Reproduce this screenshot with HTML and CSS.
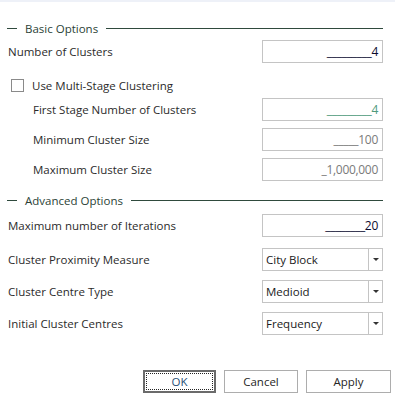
FILE: index.html
```html
<!DOCTYPE html>
<html lang="en">
<head>
    <meta charset="UTF-8">
    <title>Clustering Options</title>
    <link rel="stylesheet" href="styles.css">
</head>
<body>
    <div class="dialog">
        <div class="group-title first">
            <span class="dash"></span>
            <span class="group-text">Basic Options</span>
            <span class="rule"></span>
        </div>
        <div class="row r1">
            <span class="label">Number of Clusters</span>
            <div class="field"><span class="mask dark">_________4</span></div>
        </div>
        <div class="check-row">
            <span class="checkbox"></span>
            <span class="label">Use Multi-Stage Clustering</span>
        </div>
        <div class="row r2">
            <span class="label indent">First Stage Number of Clusters</span>
            <div class="field"><span class="mask green">_________4</span></div>
        </div>
        <div class="row r3">
            <span class="label indent">Minimum Cluster Size</span>
            <div class="field"><span class="mask grey">_____100</span></div>
        </div>
        <div class="row r3">
            <span class="label indent">Maximum Cluster Size</span>
            <div class="field"><span class="mask grey">_1,000,000</span></div>
        </div>
        <div class="group-title second">
            <span class="dash"></span>
            <span class="group-text">Advanced Options</span>
            <span class="rule"></span>
        </div>
        <div class="row r4">
            <span class="label">Maximum number of Iterations</span>
            <div class="field"><span class="mask dark">________20</span></div>
        </div>
        <div class="row r5">
            <span class="label">Cluster Proximity Measure</span>
            <div class="combo"><span class="combo-text">City Block</span><span class="combo-btn"><span class="arrow"></span></span></div>
        </div>
        <div class="row r6">
            <span class="label">Cluster Centre Type</span>
            <div class="combo"><span class="combo-text">Medioid</span><span class="combo-btn"><span class="arrow"></span></span></div>
        </div>
        <div class="row r6">
            <span class="label">Initial Cluster Centres</span>
            <div class="combo"><span class="combo-text">Frequency</span><span class="combo-btn"><span class="arrow"></span></span></div>
        </div>
        <div class="buttons">
            <button class="btn default"><span class="focus">OK</span></button>
            <button class="btn cancel">Cancel</button>
            <button class="btn apply">Apply</button>
        </div>
    </div>
</body>
</html>
```

FILE: styles.css
```css
html, body {
    margin: 0;
    padding: 0;
    background: #ffffff;
}
body {
    border-top: 2px solid #eef1f8;
    font-family: "Open Sans", "Noto Sans", sans-serif;
    font-size: 11.5px;
    color: #2b2b2b;
}
.dialog {
    display: flex;
    flex-direction: column;
    padding: 0 12px 0 8px;
}
.group-title {
    display: flex;
    align-items: center;
    height: 16px;
    margin-left: -1px;
}
.group-title.first {
    margin-top: 18px;
}
.group-title.second {
    margin-top: 11px;
}
.dash {
    width: 10px;
    border-top: 1px solid #2f4a3d;
}
.group-text {
    padding: 0 8px;
    color: #2b3f36;
}
.rule {
    flex: 1;
    border-top: 1px solid #2f4a3d;
}
.row {
    display: flex;
    align-items: center;
    justify-content: space-between;
    height: 23px;
}
.r1 { margin-top: 4px; }
.r2 { margin-top: 5px; }
.r3 { margin-top: 7px; }
.r4 { margin-top: 6px; }
.r5 { margin-top: 11px; }
.r6 { margin-top: 9px; }
.label.indent {
    margin-left: 25px;
}
.check-row {
    display: flex;
    align-items: center;
    height: 16px;
    margin-top: 14px;
}
.checkbox {
    width: 11px;
    height: 11px;
    border: 1px solid #8a8a8a;
    margin: 0 8px 0 3px;
    background: #fff;
}
.field, .combo {
    box-sizing: border-box;
    width: 121px;
    height: 23px;
    border: 1px solid #c4c4c4;
    background: #fff;
}
.field {
    display: flex;
    align-items: center;
    justify-content: flex-end;
    padding-right: 4px;
}
.mask {
    font-size: 12px;
    letter-spacing: -0.3px;
}
.mask.dark { color: #0c0c2e; }
.mask.green { color: #4f9a7c; }
.mask.grey { color: #7a7a7a; }
.combo {
    display: flex;
    align-items: stretch;
}
.combo-text {
    flex: 1;
    display: flex;
    align-items: center;
    padding-left: 3px;
    color: #1a1a1a;
}
.combo-btn {
    width: 13px;
    border-left: 1px solid #c4c4c4;
    display: flex;
    align-items: center;
    justify-content: center;
}
.arrow {
    width: 0;
    height: 0;
    border-left: 3px solid transparent;
    border-right: 3px solid transparent;
    border-top: 3px solid #333;
}
.buttons {
    display: flex;
    justify-content: flex-end;
    gap: 8px;
    margin-top: 35px;
    margin-right: -8px;
}
.btn {
    box-sizing: border-box;
    height: 23px;
    font-family: inherit;
    font-size: 11.5px;
    color: #262626;
    background: #fff;
    border: 1px solid #adadad;
    padding: 0;
}
.btn.default {
    width: 73px;
    border: 2px solid #6b6b6b;
    padding: 1px;
}
.focus {
    display: flex;
    align-items: center;
    justify-content: center;
    height: 100%;
    border: 1px dotted #222;
    box-sizing: border-box;
    color: #2a4f78;
}
.btn.cancel { width: 74px; }
.btn.apply { width: 85px; }
```
